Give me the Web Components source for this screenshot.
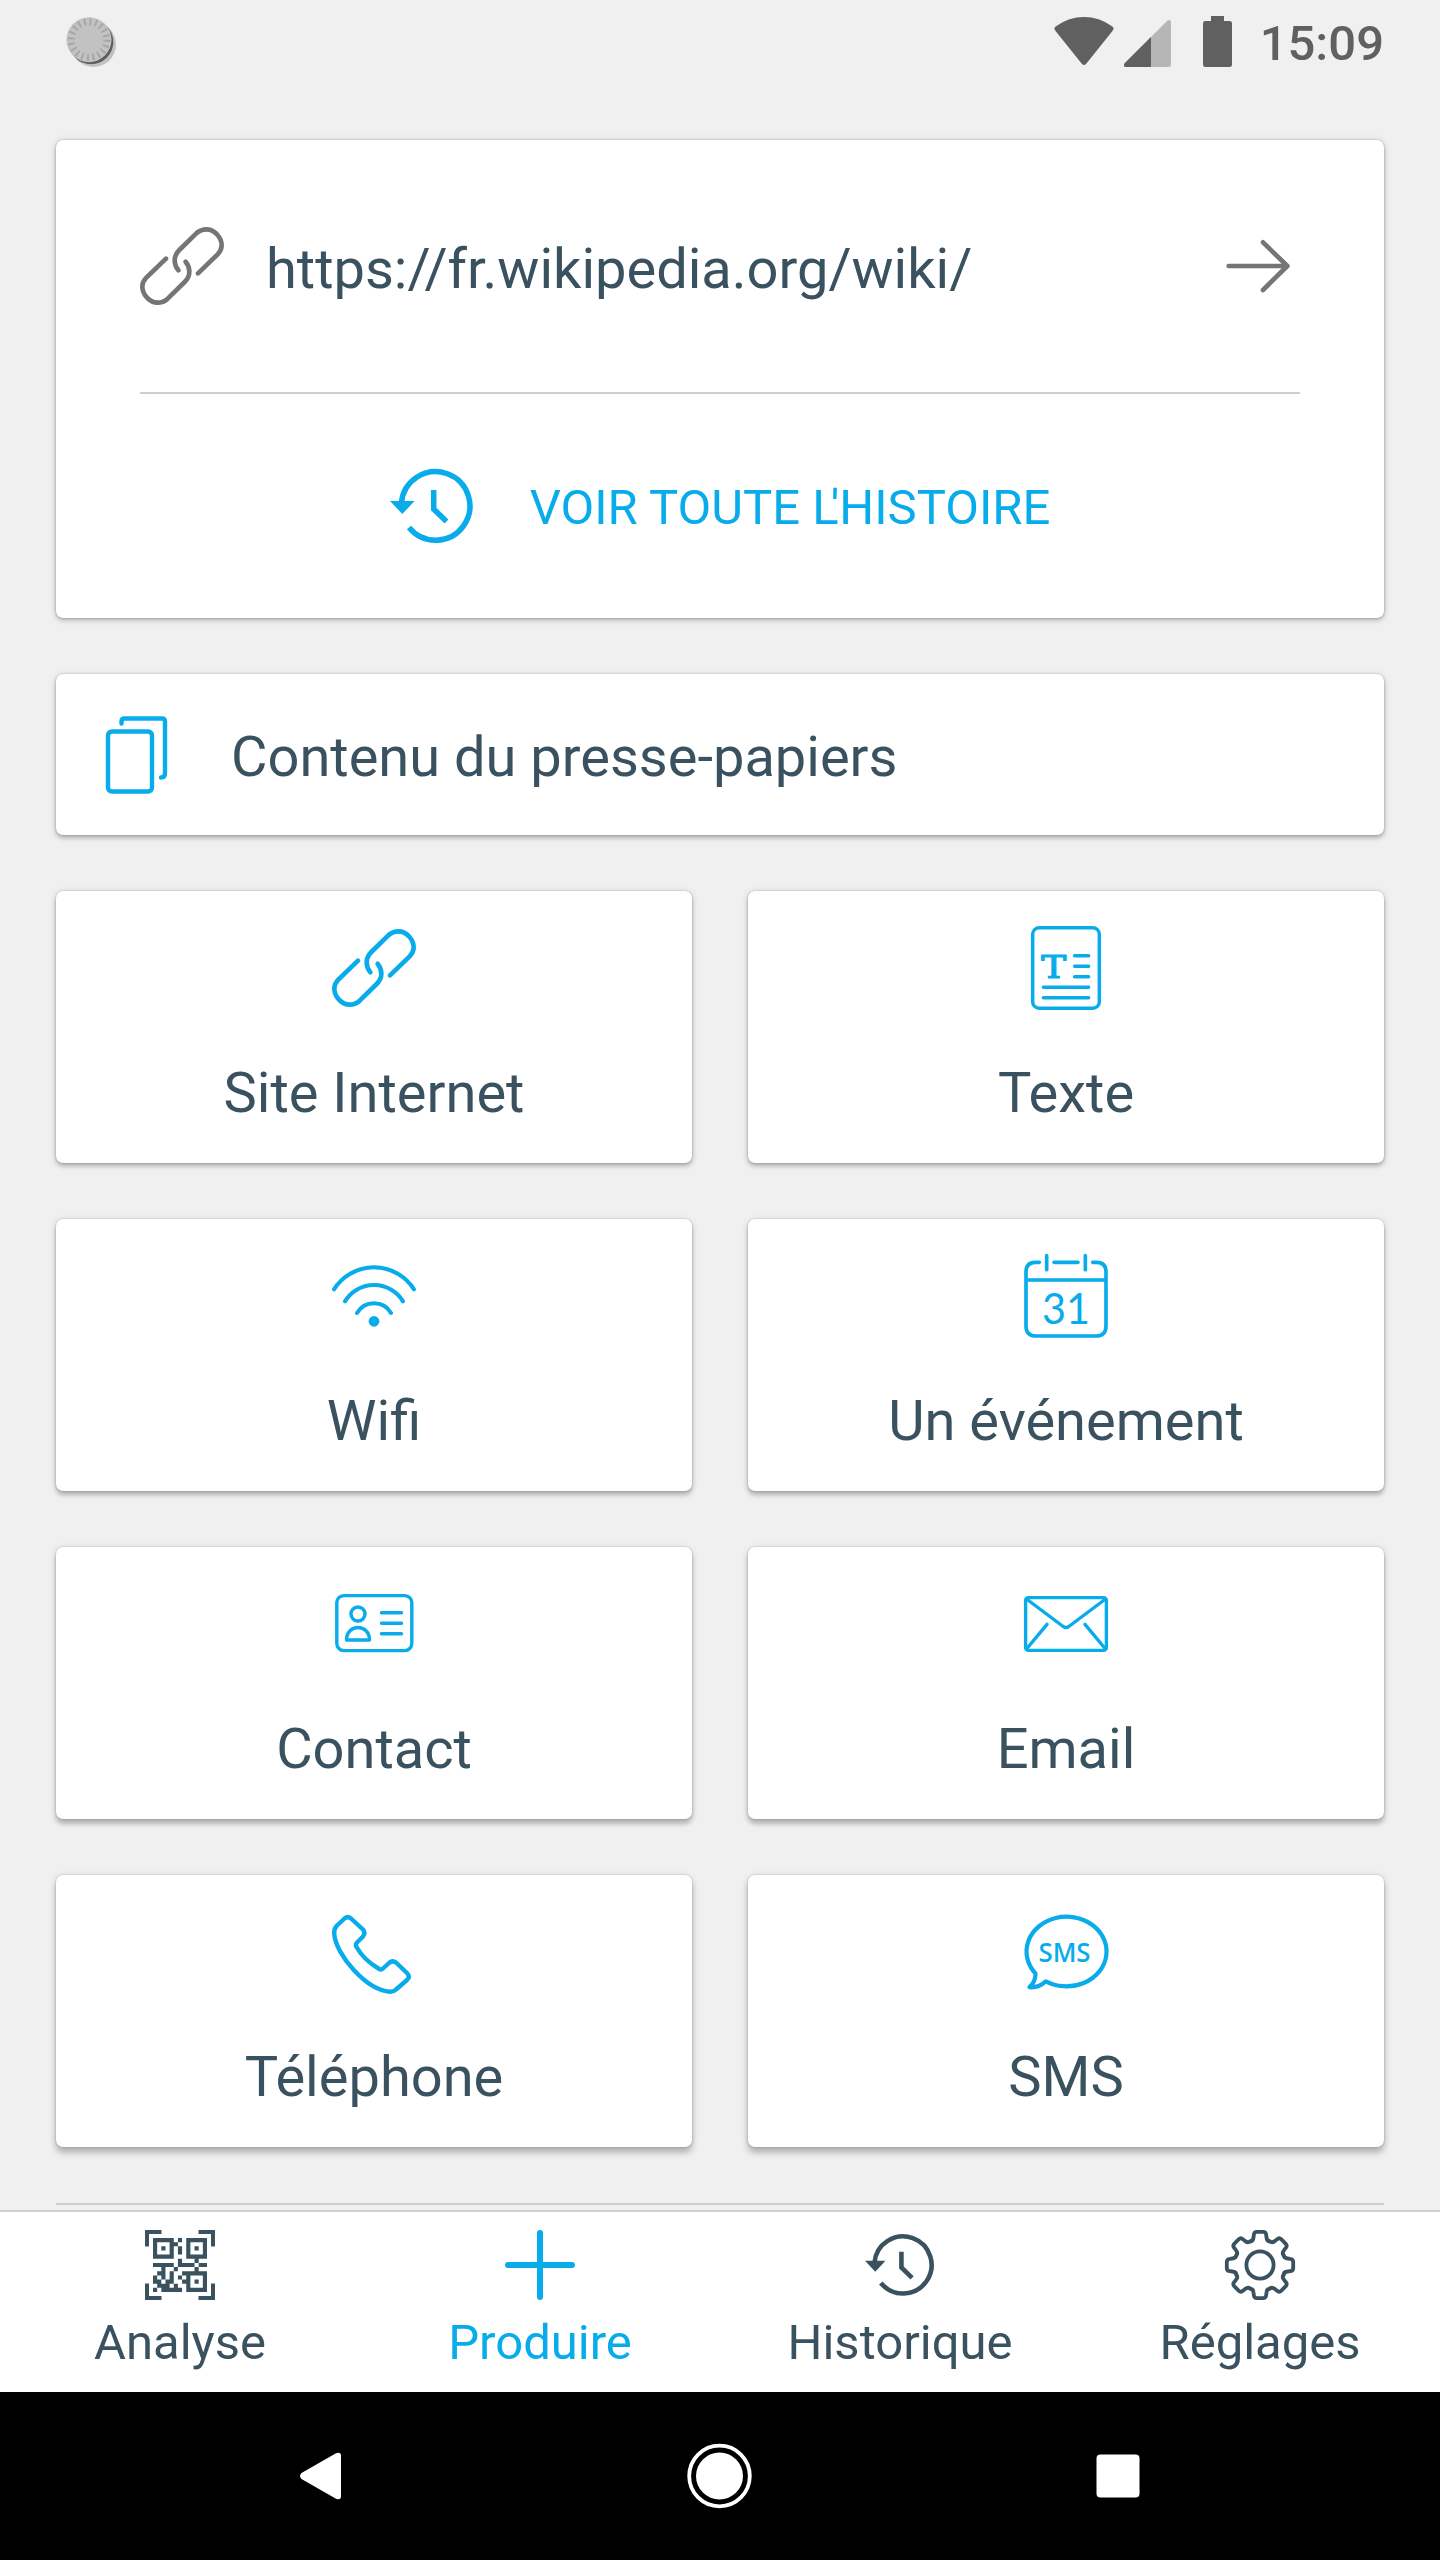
<!DOCTYPE html>
<html lang="fr">
<head>
<meta charset="utf-8">
<title>Produire</title>
<style>
html,body{margin:0;padding:0}
body{width:1440px;height:2560px;overflow:hidden;background:#f0f0f0;font-family:Roboto,"Liberation Sans",sans-serif;color:#3a525f}
</style>
</head>
<body>
<app-screen></app-screen>
<script>
const gearTooth = 'M-9.8 -23.6Q-6.8 -23.8 -6.5 -27.5L-6.2 -30Q-6 -33.2 -3 -33.2H3Q6 -33.2 6.2 -30L6.5 -27.5Q6.8 -23.8 9.8 -23.6';
const qrRows = [
  '#####.#.#####',
  '#...##..#...#',
  '#.#.#.#.#.#.#',
  '#...#.#.#...#',
  '#####...#####',
  '......#...#..',
  '#####.####.##',
  '..#..#....#..',
  '.##.#..######',
  '#.#.#.#.#...#',
  '##.##..##.#.#',
  '.###.#..#...#',
  '#.#####.#####'];
const qrModules = qrRows.map((row, y) => [...row].map((c, x) => c === '#' ? `M${x} ${y}h1v1h-1z` : '').join('')).join('');

/* Each entry: [viewBox, stroke width, markup] */
const ICONS = {
  link: ['96 138 252 252', 14, '<path d="M211 277Q200 264 200 247Q200 230 214 216L265 166Q278 154 296 154Q312 154 326 168Q341 184 341 202Q341 217 329 229L270 286M233 251Q244 264 244 281Q244 298 230 312L179 362Q166 374 148 374Q132 374 118 360Q103 344 103 326Q103 311 115 299L174 242"/>'],
  arrow: ['768 672 252 252', 14, '<path d="M806 798H980M909 727L982 798L909 870"/>'],
  history: ['0 0 84 84', 5.5, '<g stroke-linecap="butt" stroke-linejoin="miter"><path d="M11.4 39A34.3 34.3 0 1 1 19 63.6M43.7 26V45L56.5 57.5"/><path d="M0 37H24.6L12.3 50Z" fill="currentColor" stroke="none"/></g>'],
  copy: ['95 712.5 84 84', 4.4, '<rect x="108" y="731" width="44" height="60" rx="4"/><path d="M121.5 723V721Q121.5 718 124.5 718H162Q165 718 165 721V773Q165 777 161 777"/>'],
  text: ['132 138 252 252', 10.5, '<rect x="158" y="143" width="200" height="242" rx="20"/><path d="M284 227H326M284 259H326M284 290H326M190 322H326M190 353H326"/><text x="221.5" y="293" font-family="DejaVu Serif,serif" font-size="96" text-anchor="middle" textLength="75" lengthAdjust="spacingAndGlyphs" style="stroke:currentColor;stroke-width:3.5">T</text>'],
  wifi: ['96 132 252 252', 12, '<path d="M102 238A142 142 0 0 1 342 238M135 274A102 102 0 0 1 309 274M171 309A59 59 0 0 1 273 309"/><circle cx="222" cy="334" r="16" fill="currentColor" stroke="none"/>'],
  calendar: ['132 132 252 252', 11, '<path d="M178 157H166Q138 157 138 186V348Q138 378 168 378H348Q378 378 378 348V186Q378 157 350 157H338M222 157H294M200 137V179M316 137V179M138 210H378"/><text x="258" y="342" font-family="Lato,sans-serif" font-size="130" text-anchor="middle" textLength="144" lengthAdjust="spacingAndGlyphs">31</text>'],
  contact: ['0 0 84 84', 3.4, '<rect x="4.8" y="13.6" width="75" height="55" rx="7"/><circle cx="26" cy="32" r="7"/><path d="M14.5 58C14.5 50 20 45.5 26 45.5S37.5 50 37.5 58ZM49.5 30.7H69.5M49.5 41.3H69.5M49.5 51.7H69.5"/>'],
  email: ['0 0 84 84', 3.4, '<rect x="1.6" y="15.6" width="80.8" height="52.8" rx="3"/><path d="M2.5 17L38.5 44Q42 47 45.5 44L81.5 17M2.5 67L23 42.3M81.5 67L61 42.3"/>'],
  phone: ['0 0 84 84', 4.4, '<path d="M12.5 8.5L4.5 16Q1.8 19 2.2 24C4 45 34 80 58 81.8Q61.5 82 64 79.5L75 70Q78.5 66.5 75 63L64 52.5Q60.5 50 57 53L51 58.5Q49 60.5 46.5 58.5C37 53 29 45 24.5 37Q23 34.5 25 32.5L31 26.5Q34 23 31 19.5L19 8.5Q15.7 5.8 12.5 8.5Z"/>'],
  sms: ['0 0 84 84', 4.2, '<path d="M21.8 71.3A40 34.8 0 1 0 11.5 63.5Q11.500 72 5.500 77.200Q15 78 21.800 71.300Z"/><text x="40.500" y="51.800" font-family="Open Sans,sans-serif" font-weight="600" font-size="27" text-anchor="middle" textLength="52" lengthAdjust="spacingAndGlyphs">SMS</text>'],
  qr: ['0 0 70 70', 4, `<path stroke-linecap="butt" stroke-linejoin="miter" d="M2 16.5V2H16.5M53.5 2H68V16.5M68 53.5V68H53.5M16.5 68H2V53.5"/><path transform="translate(8 8) scale(4.154)" fill="currentColor" stroke="none" d="${qrModules}"/>`],
  plus: ['0 0 70 70', 6, '<path d="M3 35H67M35 3V67"/>'],
  gear: ['-35 -35 70 70', 3.8, [0,45,90,135,180,225,270,315].map(a => `<path transform="rotate(${a})" d="${gearTooth}"/>`).join('') + '<circle r="13.6"/>']
};

function define(name, render) {
  customElements.define(name, class extends HTMLElement {
    connectedCallback() {
      if (this.shadowRoot) return;
      this.attachShadow({ mode: 'open' }).innerHTML = render(this);
    }
  });
}

define('line-icon', el => {
  const [box, width, body] = ICONS[el.getAttribute('name')];
  return `<style>:host{display:block;flex:none;width:84px;height:84px}svg{display:block;width:100%;height:100%;overflow:visible}text{fill:currentColor;stroke:none}</style>
  <svg viewBox="${box}" fill="none" stroke="currentColor" stroke-width="${width}" stroke-linecap="round" stroke-linejoin="round">${body}</svg>`;
});

define('status-bar', () => `<style>
  :host{display:flex;height:84px;box-sizing:border-box;padding:0 56px 0 66px;justify-content:space-between;color:#606060}
  svg{display:block}
  .right{display:flex;align-items:flex-start}
  .right svg{margin-top:16px}
  time{font-weight:500;font-size:49px;line-height:58px;margin:15px 0 0 28px}
  </style>
  <svg width="52" height="70" viewBox="66 0 52 70">
    <circle cx="93.5" cy="44.5" r="22.5" fill="#c2c2c2"/><circle cx="91" cy="42" r="22.3" fill="#5c5c5c"/>
    <circle cx="89" cy="39.7" r="22.5" fill="#c2c2c2"/>
    <circle cx="89" cy="39.7" r="17.8" fill="none" stroke="#a6a6a6" stroke-width="7" stroke-dasharray="1.9 3.69"/>
  </svg>
  <div class="right">
    <svg width="60" height="51" viewBox="282 48 180 153"><path fill="currentColor" d="M286 92Q280 84 288 79Q326 51 372 51Q418 51 456 79Q464 84 458 92L378 192Q372 198 366 192Z"/></svg>
    <svg style="margin-left:10px" width="47" height="51" viewBox="492 48 141 153"><path fill="#b6b6b6" d="M498 201H627Q633 201 633 195V66Q631 56 622 62L494 190Q488 201 498 201Z"/><path fill="currentColor" d="M573 111L494 190Q488 201 498 201H573Z"/></svg>
    <svg style="margin-left:32px" width="29" height="51" viewBox="729 48 87 153"><path fill="currentColor" d="M753 48H792V63H809Q816 63 816 70V194Q816 201 809 201H736Q729 201 729 194V70Q729 63 736 63H753Z"/></svg>
    <time>15:09</time>
  </div>`);

define('paper-card', () => `<style>
  :host{display:block;box-sizing:border-box;background:#fff;border-radius:7px;
    box-shadow:0 0 2px rgba(0,0,0,.24),0 1px 8px rgba(0,0,0,.1),0 var(--drop,3px) var(--soft,4px) rgba(0,0,0,.22)}
  </style><slot></slot>`);

define('history-card', () => `<style>
  :host{display:block}
  paper-card{height:478px;padding:0 84px}
  .entry{display:flex;align-items:center;height:252px;border-bottom:2px solid #cecece;color:#757575}
  .url{flex:1;font-size:56px;line-height:66px;margin:6px 0 0 42px;color:#3a525f}
  .all{display:flex;align-items:center;justify-content:center;gap:56px;height:224px;color:#08aceb;font-size:49px;line-height:58px}
  .all span{margin-top:4px}
  .all b{font-weight:400;letter-spacing:-8px}
  </style>
  <paper-card>
    <div class="entry"><line-icon name="link"></line-icon><span class="url"><slot></slot></span><line-icon name="arrow"></line-icon></div>
    <div class="all"><line-icon name="history"></line-icon><span>VOIR TOUTE <b>L</b>'HISTOIRE</span></div>
  </paper-card>`);

define('clipboard-card', () => `<style>
  :host{display:block}
  paper-card{display:flex;align-items:center;height:161px;padding-left:39px}
  line-icon{color:#08aceb}
  span{font-size:56px;line-height:66px;margin:4px 0 0 52px}
  </style>
  <paper-card><line-icon name="copy"></line-icon><span><slot></slot></span></paper-card>`);

define('create-tile', el => `<style>
  :host{display:block}
  paper-card{display:flex;flex-direction:column;align-items:center;height:272px;padding-top:35px}
  line-icon{color:#08aceb}
  span{font-size:56px;line-height:66px;margin-top:50px}
  </style>
  <paper-card><line-icon name="${el.getAttribute('icon')}"></line-icon><span><slot></slot></span></paper-card>`);

define('tab-item', el => `<style>
  :host{flex:1;display:flex;flex-direction:column;align-items:center;padding-top:18px}
  :host([active]){color:#08aceb}
  line-icon{width:70px;height:70px}
  span{font-size:49px;line-height:58px;margin-top:14px}
  </style><line-icon name="${el.getAttribute('icon')}"></line-icon><span><slot></slot></span>`);

define('tab-bar', () => `<style>
  :host{display:flex;flex:none;box-sizing:border-box;height:182px;background:#fff;border-top:2px solid #cfcfcf}
  </style><slot></slot>`);

define('system-nav', () => `<style>
  :host{display:flex;flex:none;justify-content:center;gap:328px;align-items:center;height:168px;background:#000}
  svg{display:block;width:70px;height:70px;fill:#fff}
  </style>
  <svg viewBox="0 0 70 70"><path d="M14.5 32L49 12.3Q54 10.5 54 15V55Q54 59.5 49 57.7L14.5 38Q11.5 35 14.5 32Z"/></svg>
  <svg viewBox="0 0 70 70"><circle cx="34.5" cy="35" r="30.3" fill="none" stroke="#fff" stroke-width="3.8"/><circle cx="34.5" cy="35" r="23.5"/></svg>
  <svg viewBox="0 0 70 70"><rect x="13.5" y="13.5" width="43" height="43" rx="4"/></svg>`);

define('app-screen', () => `<style>
  :host{display:flex;flex-direction:column;width:1440px;height:2560px;overflow:hidden}
  main{flex:1;min-height:0;overflow:hidden;display:flex;flex-direction:column;gap:56px;padding:56px 56px 0}
  .grid{display:grid;grid-template-columns:1fr 1fr;gap:56px}
  hr{flex:none;width:100%;height:2px;margin:0;border:0;background:#cecece}
  </style>
  <status-bar></status-bar>
  <main>
    <history-card style="--drop:2px;--soft:4px">https://fr.wikipedia.org/wiki/</history-card>
    <clipboard-card style="--drop:3px;--soft:4px">Contenu du presse-papiers</clipboard-card>
    <div class="grid">
      <create-tile icon="link" style="--drop:3px">Site Internet</create-tile>
      <create-tile icon="text" style="--drop:3px">Texte</create-tile>
      <create-tile icon="wifi" style="--drop:4px">Wifi</create-tile>
      <create-tile icon="calendar" style="--drop:4px">Un événement</create-tile>
      <create-tile icon="contact" style="--drop:5px;--soft:5px">Contact</create-tile>
      <create-tile icon="email" style="--drop:5px;--soft:5px">Email</create-tile>
      <create-tile icon="phone" style="--drop:6px;--soft:6px">Téléphone</create-tile>
      <create-tile icon="sms" style="--drop:6px;--soft:6px">SMS</create-tile>
    </div>
    <hr>
  </main>
  <tab-bar>
    <tab-item icon="qr">Analyse</tab-item>
    <tab-item icon="plus" active>Produire</tab-item>
    <tab-item icon="history">Historique</tab-item>
    <tab-item icon="gear">Réglages</tab-item>
  </tab-bar>
  <system-nav></system-nav>`);
</script>
</body>
</html>
